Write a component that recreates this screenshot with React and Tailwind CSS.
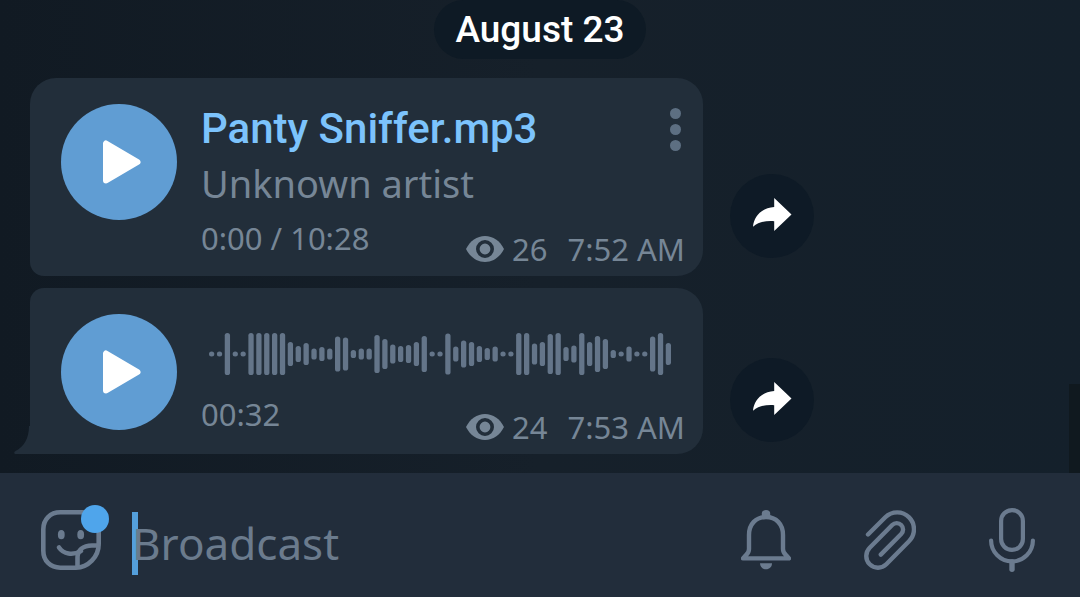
import React, { useState } from 'react';

const WAVEFORM = [
  5, 5, 42, 5, 5, 42, 42, 42, 42, 42, 24, 16, 22, 11, 14, 11, 35, 33, 8, 11,
  11, 38, 30, 19, 16, 18, 24, 36, 5, 5, 41, 15, 27, 24, 16, 12, 15, 5, 5, 42,
  42, 21, 24, 40, 42, 14, 17, 42, 24, 36, 30, 8, 5, 15, 5, 5, 35, 42, 22,
];

const EyeIcon = () => (
  <svg viewBox="0 0 38 26" className="w-[38px] h-[26px]" fill="none" aria-hidden="true">
    <path d="M0 13C4 5 11 0 19 0s15 5 19 13c-4 8-11 13-19 13S4 21 0 13Z" fill="#768696" />
    <circle cx="19" cy="13" r="7.2" stroke="#222e3a" strokeWidth="3.6" />
  </svg>
);

const StickerIcon = () => (
  <svg viewBox="0 0 60 60" className="size-[60px]" fill="none" stroke="currentColor" strokeWidth="4.6" strokeLinecap="round" aria-hidden="true">
    <path d="M57.7 30V19.3c0-10-7-17-17-17H19.3c-10 0-17 7-17 17v21.4c0 10 7 17 17 17H35C47 57.7 57.7 47 57.7 34Z" />
    <path d="M57 35.5H51c-9 0-14.500 4.500-14.500 12.500V56" />
    <path d="M18 37.500c4.500 6.500 13.500 8.500 22 3.500" />
    <ellipse cx="20.300" cy="24.700" rx="3.400" ry="4.600" fill="currentColor" stroke="none" />
    <ellipse cx="39.700" cy="24.700" rx="3.400" ry="4.600" fill="currentColor" stroke="none" />
  </svg>
);

const BellIcon = () => (
  <svg viewBox="0 0 50 60" className="w-[50px] h-[60px]" fill="none" stroke="currentColor" strokeWidth="4.4" strokeLinejoin="round" aria-hidden="true">
    <path d="M8 25C8 14 15 7 25 7s17 7 17 18v14c0 3 1 4.500 3 6l3 3.400H2L5 45c2-1.500 3-3 3-6Z" />
    <path d="M20.800 6V3.500c0-2 1.500-3.500 4.200-3.500s4.200 1.500 4.200 3.500V6Z" fill="currentColor" stroke="none" />
    <path d="M19 53.300h12c0 3.500-2.500 6-6 6s-6-2.500-6-6Z" fill="currentColor" stroke="none" />
  </svg>
);

const ClipIcon = () => (
  <svg viewBox="0 0 52 60" className="w-[52px] h-[60px]" fill="none" stroke="currentColor" strokeWidth="4.4" strokeLinecap="round" aria-hidden="true">
    <path d="M4 24.500 21.300 7.300A16.800 16.800 0 0 1 45 31.200L22.300 54.300A11.700 11.700 0 0 1 5.700 37.700L28.200 15A6.300 6.300 0 0 1 37.200 24L16.800 44.600" />
  </svg>
);

const MicIcon = () => (
  <svg viewBox="0 0 46 64" className="w-[46px] h-[64px]" fill="none" stroke="currentColor" strokeWidth="4.2" strokeLinecap="round" aria-hidden="true">
    <rect x="12.100" y="2.100" width="21.800" height="39.800" rx="10.900" />
    <path d="M2.100 32.500a20.900 20.900 0 0 0 41.800 0" />
    <path d="M23 54v7.200" strokeWidth="5.400" />
  </svg>
);

const PlayButton = ({ label }) => (
  <button type="button" aria-label={label} className="size-[116px] shrink-0 rounded-full bg-[#609dd3]">
    <svg viewBox="0 0 116 116" className="size-full" aria-hidden="true">
      <path d="M45 39.500v37L76.500 58Z" fill="#fff" stroke="#fff" strokeWidth="6" strokeLinejoin="round" />
    </svg>
  </button>
);

const ShareButton = () => (
  <button type="button" aria-label="Share" className="flex size-[84px] shrink-0 items-center justify-center rounded-full bg-[#0e1a26] pb-[3px]">
    <svg viewBox="0 0 39 33" className="w-[39px] h-[33px]" aria-hidden="true">
      <path d="M0 28.800C1 18 9 9.600 21.200 9V0L38.500 16.500 21.200 33V23.200C13 22.800 6 23.500 0 28.800Z" fill="#fff" />
    </svg>
  </button>
);

const Meta = ({ views, time }) => (
  <div className="flex items-center self-end leading-[42px] whitespace-nowrap">
    <EyeIcon />
    <span className="ml-2">{views}</span>
    <time className="ml-5">{time}</time>
  </div>
);

const Waveform = () => (
  <svg viewBox="0 0 462 42" className="w-[462px] h-[42px]" fill="#647589" aria-hidden="true">
    {WAVEFORM.map((h, i) => (
      <rect key={i} x={i * 7.875} y={21 - h / 2} width="5.3" height={h} rx="2.6" />
    ))}
  </svg>
);

const App = () => {
  const [message, setMessage] = useState('');

  return (
    <div className="flex min-h-screen flex-col bg-[#15202a] font-['Noto_Sans',sans-serif] text-[#768696]">
      <main className="relative flex flex-1 flex-col bg-linear-to-r from-[#111a23] via-[#16202a] to-[#14202b] pb-[19px]">
        <h2 className="mx-auto mb-[19px] h-[59px] rounded-full bg-[#0e1a25] px-[21px] font-[Roboto,sans-serif] text-[37px] leading-[59px] font-medium text-white">
          August 23
        </h2>

        <div className="flex flex-col gap-3 pl-[30px]">
          <div className="flex items-end gap-[27px]">
            <article className="flex h-[198px] w-full max-w-[673px] gap-6 rounded-[26px] rounded-bl-[14px] bg-[#222e3a] pt-[26px] pr-[18px] pl-[31px]">
              <PlayButton label="Play Panty Sniffer.mp3" />
              <div className="flex min-w-0 flex-1 flex-col">
                <div className="flex h-[50px] items-center justify-between">
                  <h3 className="truncate font-[Roboto,sans-serif] text-[42px] leading-[50px] font-medium text-[#7cc3fc]">
                    Panty Sniffer.mp3
                  </h3>
                  <button type="button" aria-label="More options" className="flex flex-col gap-[5px] pr-1">
                    <span className="size-[11px] rounded-full bg-[#5d6f82]" />
                    <span className="size-[11px] rounded-full bg-[#5d6f82]" />
                    <span className="size-[11px] rounded-full bg-[#5d6f82]" />
                  </button>
                </div>
                <p className="text-[38px] leading-[58px]">Unknown artist</p>
                <div className="flex h-[58px] justify-between text-[31px] leading-[52px]">
                  <span>0:00 / 10:28</span>
                  <Meta views="26" time="7:52 AM" />
                </div>
              </div>
            </article>
            <div className="pb-[18px]">
              <ShareButton />
            </div>
          </div>

          <div className="flex items-end gap-[27px]">
            <article className="relative flex h-[166px] w-full max-w-[673px] gap-6 rounded-[26px] rounded-tl-[14px] rounded-bl-none bg-[#222e3a] pt-[26px] pr-[18px] pl-[31px]">
              <svg viewBox="0 0 16 28" className="absolute bottom-0 -left-4 h-7 w-4" aria-hidden="true">
                <path d="M15 0h1v28H2c-2 0-2.500-2-.5-3C10 21 15 12 15 0Z" fill="#222e3a" />
              </svg>
              <PlayButton label="Play voice message" />
              <div className="flex min-w-0 flex-1 flex-col">
                <div className="flex h-20 items-center pl-2">
                  <Waveform />
                </div>
                <div className="flex h-[54px] justify-between text-[31px] leading-[40px]">
                  <span>00:32</span>
                  <Meta views="24" time="7:53 AM" />
                </div>
              </div>
            </article>
            <div className="pb-3">
              <ShareButton />
            </div>
          </div>
        </div>

        <div className="absolute right-0 bottom-0 h-[89px] w-[11px] bg-[#10191f]" />
      </main>

      <footer className="flex items-center bg-[#222d3b] pt-[34px] pr-[45px] pb-[18px] pl-[41px] text-[#6b7b8f]">
        <button type="button" aria-label="Stickers" className="relative pb-[6px]">
          <StickerIcon />
          <span className="absolute -top-[5px] -right-2 size-7 rounded-full bg-[#4fa5eb]" />
        </button>
        <div className="ml-[31px] flex min-w-0 flex-1 items-center">
          <span className="h-[63px] w-[6px] shrink-0 bg-[#549fdb]" />
          <input
            type="text"
            aria-label="Broadcast message"
            placeholder="Broadcast"
            value={message}
            onChange={(e) => setMessage(e.target.value)}
            className="-ml-[6px] h-[72px] w-full bg-transparent text-[44px] outline-none placeholder:text-[#6b7b8d]"
          />
        </div>
        <div className="flex items-center gap-[73px] pb-[6px]">
          <button type="button" aria-label="Notifications">
            <BellIcon />
          </button>
          <button type="button" aria-label="Attach file">
            <ClipIcon />
          </button>
          <button type="button" aria-label="Record voice message">
            <MicIcon />
          </button>
        </div>
      </footer>
    </div>
  );
};

export default App;
